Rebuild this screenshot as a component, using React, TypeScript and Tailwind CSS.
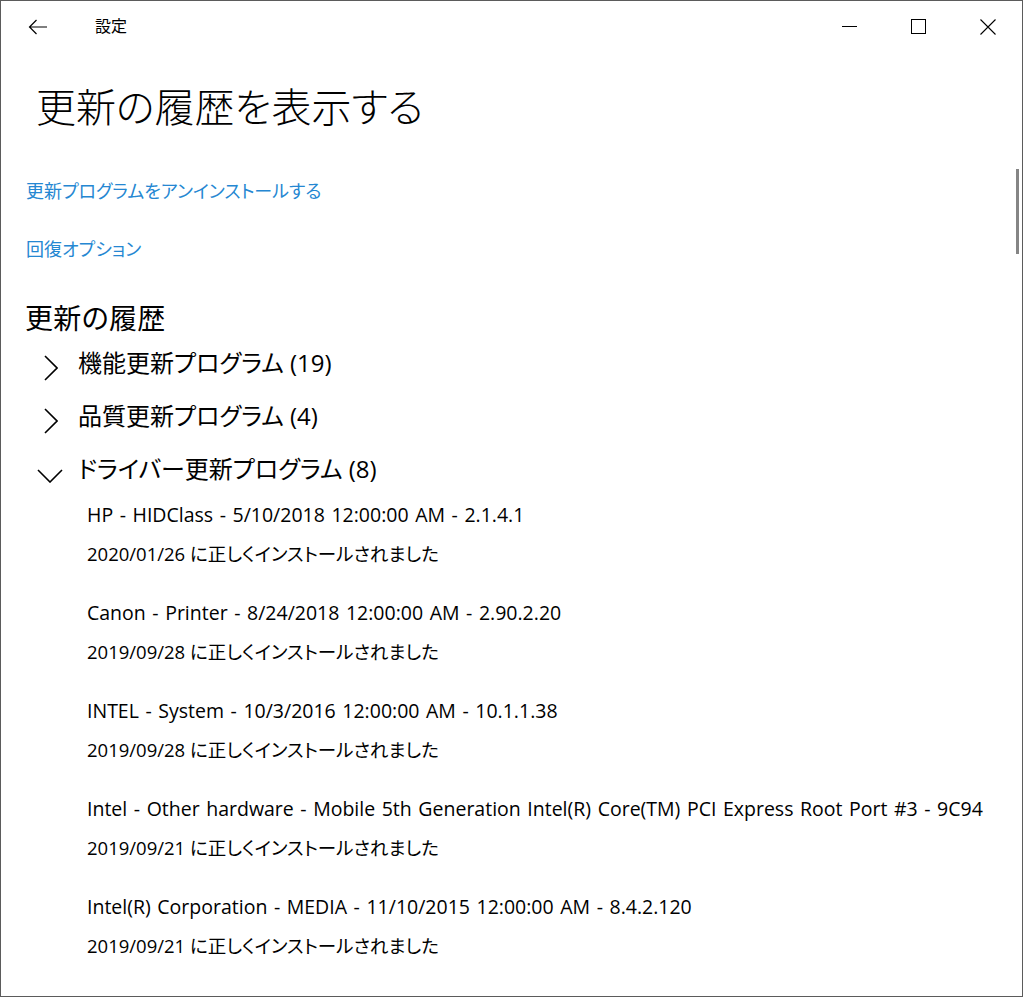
import { ReactNode } from 'react'

const history = [
  { title: 'HP - HIDClass - 5/10/2018 12:00:00 AM - 2.1.4.1', date: '2020/01/26' },
  { title: 'Canon - Printer - 8/24/2018 12:00:00 AM - 2.90.2.20', date: '2019/09/28' },
  { title: 'INTEL - System - 10/3/2016 12:00:00 AM - 10.1.1.38', date: '2019/09/28' },
  {
    title:
      'Intel - Other hardware - Mobile 5th Generation Intel(R) Core(TM) PCI Express Root Port #3 - 9C94',
    date: '2019/09/21',
  },
  { title: 'Intel(R) Corporation - MEDIA - 11/10/2015 12:00:00 AM - 8.4.2.120', date: '2019/09/21' },
]

const groups = [
  { label: '機能更新プログラム (19)', open: false },
  { label: '品質更新プログラム (4)', open: false },
  { label: 'ドライバー更新プログラム (8)', open: true },
]

function CaptionButton({ children }: { children: ReactNode }) {
  return (
    <div className="w-[69px] h-[52px] flex items-center justify-center">{children}</div>
  )
}

function Chevron({ open }: { open: boolean }) {
  if (open) {
    return (
      <svg width="26" height="14" viewBox="0 0 26 14" className="ml-[-1px] mt-[14px]">
        <path d="M1 1 L13 13 L25 1" fill="none" stroke="#000" strokeWidth="1.6" />
      </svg>
    )
  }
  return (
    <svg width="14" height="26" viewBox="0 0 14 26" className="ml-[6px] mt-[6px]">
      <path d="M1 1 L13 13 L1 25" fill="none" stroke="#000" strokeWidth="1.6" />
    </svg>
  )
}

export default function App() {
  return (
    <div
      className="relative w-[1023px] h-[997px] bg-white border border-[#5b5b5b] overflow-hidden text-black [font-feature-settings:'palt']"
      style={{ fontFamily: '"Open Sans", "Noto Sans CJK JP", sans-serif' }}
    >
      {/* title bar */}
      <div className="flex items-center h-[52px]">
        <div className="w-[74px] flex justify-center">
          <svg width="20" height="16" viewBox="0 0 20 16" className="ml-[-1px]">
            <path d="M19 8 H1.5 M8.5 1 L1.5 8 L8.5 15" fill="none" stroke="#000" strokeWidth="1.2" />
          </svg>
        </div>
        <span className="ml-[20px] text-[16px] mt-[-2px]">設定</span>
        <div className="ml-auto flex">
          <CaptionButton>
            <div className="w-[15px] h-px bg-black mt-[-1px]" />
          </CaptionButton>
          <CaptionButton>
            <div className="w-[15px] h-[15px] border border-black mt-[-1px]" />
          </CaptionButton>
          <CaptionButton>
            <svg width="16" height="16" viewBox="0 0 16 16" className="mt-[-1px]">
              <path d="M0.5 0.5 L15.5 15.5 M15.5 0.5 L0.5 15.5" stroke="#000" strokeWidth="1.1" />
            </svg>
          </CaptionButton>
        </div>
      </div>

      {/* page */}
      <div className="pl-[25px]">
        <h1 className="mt-[26px] ml-[10px] h-[56px] leading-[56px] text-[40px] font-light">
          更新の履歴を表示する
        </h1>

        <div className="mt-[41px] h-[30px] leading-[30px] text-[18px] text-[#2587d2]">
          更新プログラムをアンインストールする
        </div>
        <div className="mt-[28px] h-[30px] leading-[30px] text-[18px] text-[#2587d2]">
          回復オプション
        </div>

        <h2 className="mt-[35px] ml-[-1px] h-[38px] leading-[38px] text-[28px] tracking-[0.3px]">
          更新の履歴
        </h2>

        {groups.map((g) => (
          <div key={g.label} className="flex h-[53px]">
            <div className="w-[52px] flex items-start pt-[12px] pl-[12px]">
              <Chevron open={g.open} />
            </div>
            <div className="h-[53px] leading-[51px] text-[24px]">{g.label}</div>
          </div>
        ))}

        <div className="pl-[61px] flex flex-col gap-[20px]">
          {history.map((h) => (
            <div key={h.title}>
              <div className="h-[39px] leading-[37px] whitespace-nowrap text-[19.5px] [word-spacing:1.5px]">
                {h.title}
              </div>
              <div className="h-[39px] leading-[37px] whitespace-nowrap text-[18.5px]">
                {h.date} に正しくインストールされました
              </div>
            </div>
          ))}
        </div>
      </div>

      {/* scrollbar thumb */}
      <div className="absolute right-[3px] top-[168px] w-[3px] h-[85px] bg-[#858585]" />
    </div>
  )
}
